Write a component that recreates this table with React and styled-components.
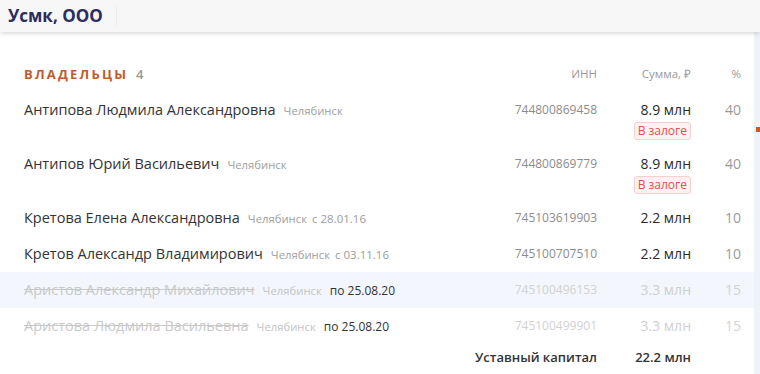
import React from 'react';
import styled, { createGlobalStyle } from 'styled-components';

const GlobalStyle = createGlobalStyle`
  html, body {
    margin: 0;
    padding: 0;
    background: #eef3fa;
    font-family: 'Open Sans', 'Liberation Sans', sans-serif;
  }
`;

const Page = styled.div`
  width: 760px;
  height: 374px;
  overflow: hidden;
  position: relative;
  display: flex;
  flex-direction: column;
`;

const TopBar = styled.header`
  height: 32px;
  flex-shrink: 0;
  background: #f7f7f7;
  display: flex;
  align-items: center;
  padding-left: 8px;
  box-shadow: 0 2px 4px rgba(0, 0, 0, 0.13);
  position: relative;
  z-index: 2;
`;

const CompanyName = styled.div`
  font-size: 17px;
  font-weight: 700;
  color: #2c2d5b;
  padding-right: 13px;
  border-right: 1px solid #ececec;
  line-height: 22px;
`;

const Card = styled.section`
  width: 754px;
  flex: 1;
  background: #fff;
  padding-top: 32px;
`;

const Grid = styled.div`
  display: grid;
  grid-template-columns: 1fr 120px 94px 50px;
  align-items: start;
  padding: ${p => (p.$badge ? '8px 13px 6px 24px' : '8px 13px 8px 24px')};
  background: ${p => (p.$highlight ? '#f3f6fc' : 'transparent')};
`;

const HeadRow = styled(Grid)`
  padding-top: 0;
  padding-bottom: 8px;
  align-items: center;
`;

const TotalRow = styled(Grid)`
  padding-top: 3px;
`;

const SectionTitle = styled.div`
  font-size: 13px;
  font-weight: 700;
  letter-spacing: 2.2px;
  color: #c55b2c;
  line-height: 20px;

  span {
    color: #999;
    font-weight: 600;
    letter-spacing: 0;
    margin-left: 2px;
  }
`;

const ColHead = styled.div`
  font-size: 11.5px;
  color: #9a9a9a;
  text-align: right;
  line-height: 20px;
`;

const NameCell = styled.div`
  display: flex;
  align-items: baseline;
  gap: 8px;
  height: 20px;
  line-height: 20px;
  white-space: nowrap;
`;

const Name = styled.span`
  font-size: 14.5px;
  color: ${p => (p.$gone ? '#c9c9c9' : '#333')};
  text-decoration: ${p => (p.$gone ? 'line-through' : 'none')};
`;

const City = styled.span`
  font-size: 11.3px;
  color: ${p => (p.$gone ? '#c4c4c4' : '#a0a0a0')};
`;

const Since = styled.span`
  font-size: 11.5px;
  color: #9c9c9c;
  margin-left: -3px;
`;

const Until = styled.span`
  font-size: 12px;
  color: #333;
`;

const Inn = styled.div`
  font-size: 12px;
  color: ${p => (p.$gone ? '#d2d2d2' : '#8c8c8c')};
  text-align: right;
  line-height: 20px;
`;

const SumCell = styled.div`
  display: flex;
  flex-direction: column;
  align-items: flex-end;
`;

const Sum = styled.div`
  font-size: 14px;
  color: ${p => (p.$gone ? '#cfcfcf' : '#2a2a2a')};
  line-height: 20px;
`;

const Badge = styled.span`
  margin-top: 2px;
  font-size: 12px;
  line-height: 16px;
  padding: 0 3px;
  color: #d9534f;
  background: #fdf1f1;
  border: 1px solid #f4d0d0;
  border-radius: 3px;
`;

const Pct = styled.div`
  font-size: 14px;
  color: ${p => (p.$gone ? '#d2d2d2' : '#9a9a9a')};
  text-align: right;
  line-height: 20px;
`;

const TotalLabel = styled.div`
  grid-column: 2;
  justify-self: end;
  white-space: nowrap;
  font-size: 13px;
  font-weight: 600;
  color: #333;
  line-height: 20px;
`;

const TotalValue = styled(TotalLabel)`
  grid-column: 3;
`;

const SideMark = styled.div`
  position: absolute;
  left: 756px;
  top: 127px;
  width: 4px;
  height: 5px;
  background: #d9531e;
`;

const owners = [
  { name: 'Антипова Людмила Александровна', inn: '744800869458', sum: '8.9 млн', pct: '40', pledge: true },
  { name: 'Антипов Юрий Васильевич', inn: '744800869779', sum: '8.9 млн', pct: '40', pledge: true },
  { name: 'Кретова Елена Александровна', since: 'с 28.01.16', inn: '745103619903', sum: '2.2 млн', pct: '10' },
  { name: 'Кретов Александр Владимирович', since: 'с 03.11.16', inn: '745100707510', sum: '2.2 млн', pct: '10' },
  { name: 'Аристов Александр Михайлович', until: 'по 25.08.20', inn: '745100496153', sum: '3.3 млн', pct: '15', gone: true, highlight: true },
  { name: 'Аристова Людмила Васильевна', until: 'по 25.08.20', inn: '745100499901', sum: '3.3 млн', pct: '15', gone: true },
];

export default function App() {
  return (
    <Page>
      <GlobalStyle />
      <TopBar>
        <CompanyName>Усмк, ООО</CompanyName>
      </TopBar>
      <Card>
        <HeadRow>
          <SectionTitle>
            ВЛАДЕЛЬЦЫ <span>4</span>
          </SectionTitle>
          <ColHead>ИНН</ColHead>
          <ColHead>Сумма, ₽</ColHead>
          <ColHead>%</ColHead>
        </HeadRow>
        {owners.map(o => (
          <Grid key={o.inn} $badge={o.pledge} $highlight={o.highlight}>
            <NameCell>
              <Name $gone={o.gone}>{o.name}</Name>
              <City $gone={o.gone}>Челябинск</City>
              {o.since && <Since>{o.since}</Since>}
              {o.until && <Until>{o.until}</Until>}
            </NameCell>
            <Inn $gone={o.gone}>{o.inn}</Inn>
            <SumCell>
              <Sum $gone={o.gone}>{o.sum}</Sum>
              {o.pledge && <Badge>В залоге</Badge>}
            </SumCell>
            <Pct $gone={o.gone}>{o.pct}</Pct>
          </Grid>
        ))}
        <TotalRow>
          <TotalLabel>Уставный капитал</TotalLabel>
          <TotalValue>22.2 млн</TotalValue>
        </TotalRow>
      </Card>
      <SideMark />
    </Page>
  );
}
